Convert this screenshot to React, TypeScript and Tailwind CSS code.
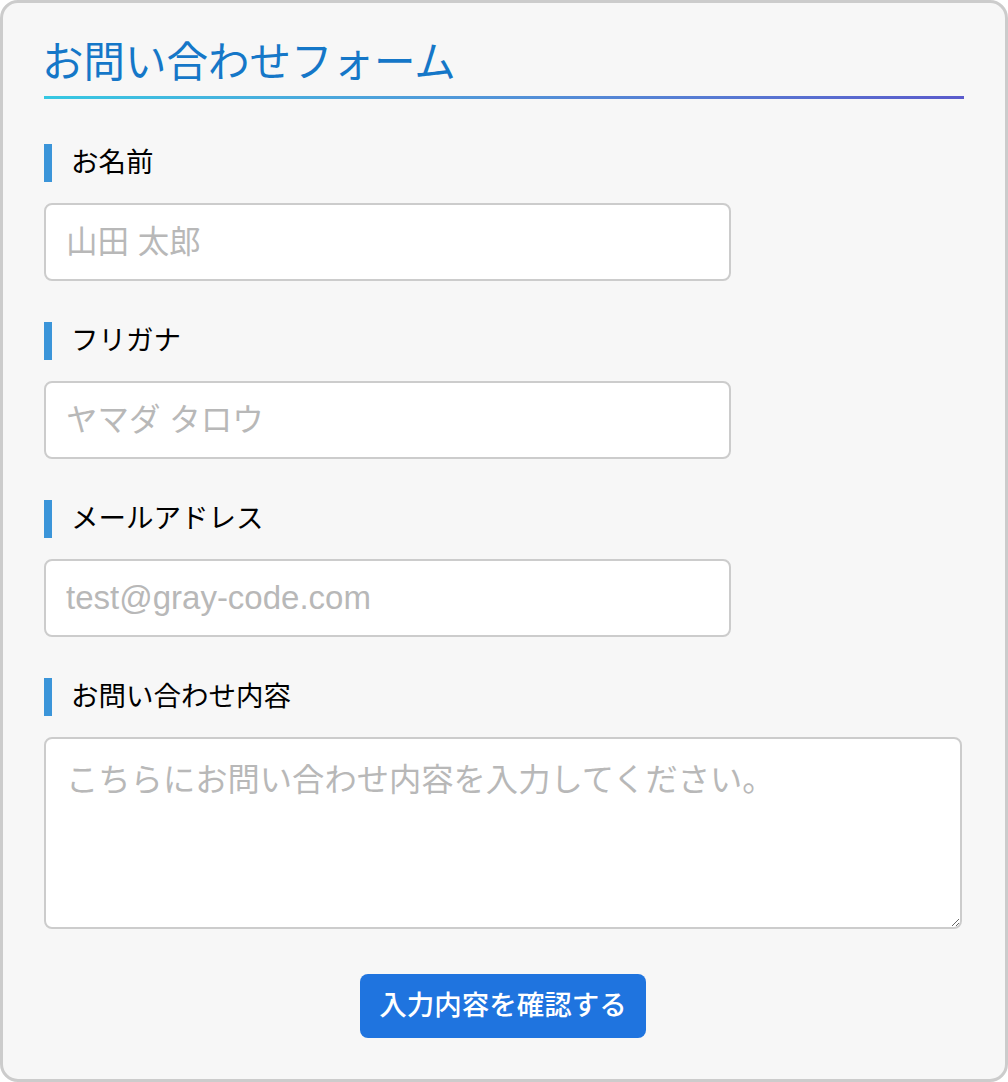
const fields = [
  { label: "お名前", placeholder: "山田 太郎", size: "text-[31.5px]" },
  { label: "フリガナ", placeholder: "ヤマダ タロウ", size: "text-[31.5px]" },
  { label: "メールアドレス", placeholder: "test@gray-code.com", size: "text-[33px]" },
];

const Label = ({ text }: { text: string }) => (
  <div className="flex items-center h-[38px] border-l-[8px] border-[#3b95d9] pl-[19px] text-[27.5px] text-black">
    {text}
  </div>
);

const App = () => {
  return (
    <div
      className="w-[1008px] h-[1082px] bg-[#f7f7f7] border-[3px] border-[#cccccc] rounded-[18px] px-[41px] pt-[35px]"
      style={{ fontFamily: '"Liberation Sans", "Noto Sans CJK JP", sans-serif' }}
    >
      <h1 className="text-[41.5px] leading-[50px] text-[#1577c8] pb-[8px] -ml-[2px]">
        お問い合わせフォーム
      </h1>
      <div className="h-[3px] bg-gradient-to-r from-[#35c8e2] to-[#5a5bcc]"></div>

      <form className="flex flex-col mt-[45px]">
        {fields.map((item, index) => (
          <div key={index} className="flex flex-col gap-[21px] mb-[41px]">
            <Label text={item.label} />
            <input
              type="text"
              placeholder={item.placeholder}
              className={`w-[687px] h-[78px] bg-white border-2 border-[#cccccc] rounded-[8px] px-[20px] ${item.size} placeholder:text-[#b8b8b8] outline-none`}
            />
          </div>
        ))}
        <div className="flex flex-col gap-[21px]">
          <Label text="お問い合わせ内容" />
          <textarea
            placeholder="こちらにお問い合わせ内容を入力してください。"
            className="w-[918px] h-[192px] bg-white border-2 border-[#cccccc] rounded-[8px] px-[20px] py-[22px] text-[32.3px] leading-[38px] placeholder:text-[#b8b8b8] outline-none"
          ></textarea>
        </div>
        <div className="flex justify-center mt-[45px] pr-[2px]">
          <button
            type="button"
            className="w-[286px] h-[64px] bg-[#1f74df] rounded-[8px] text-white text-[27.5px] font-medium"
          >
            入力内容を確認する
          </button>
        </div>
      </form>
    </div>
  );
};

export default App;
